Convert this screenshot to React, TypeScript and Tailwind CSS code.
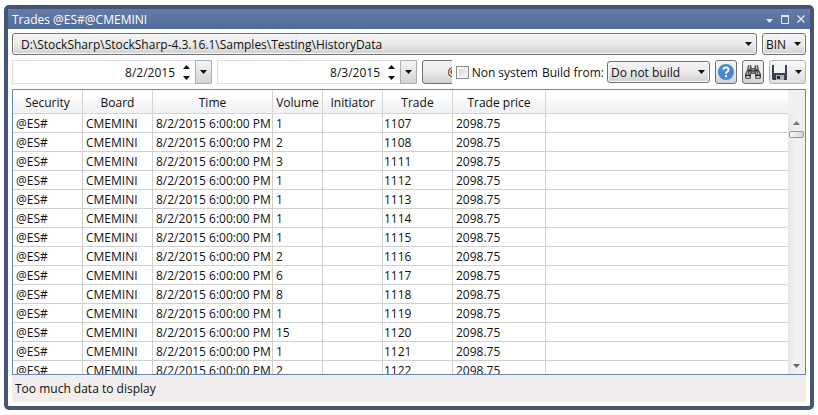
import React from "react";

const volumes = [1, 2, 3, 1, 1, 1, 1, 2, 6, 8, 1, 15, 1, 2];
const trades = [1107, 1108, 1111, 1112, 1113, 1114, 1115, 1116, 1117, 1118, 1119, 1120, 1121, 1122];
const columns = ["Security", "Board", "Time", "Volume", "Initiator", "Trade", "Trade price", ""];

const face = "bg-linear-to-b from-[#f3f3f3] via-[#ebebeb] via-50% to-[#cfcfcf]";

function Arrow({ className = "", up = false }: { className?: string; up?: boolean }) {
  return (
    <svg width="7" height="4" viewBox="0 0 7 4" className={className} aria-hidden="true">
      <path d={up ? "M0 4L3.5 0L7 4Z" : "M0 0H7L3.5 4Z"} fill="currentColor" />
    </svg>
  );
}

type ComboProps = { id?: string; label?: string; value: string; box: string; text: string };

function Combo({ id, label, value, box, text }: ComboProps) {
  return (
    <div className={`relative ${box}`}>
      <select
        id={id}
        aria-label={label}
        className={`block h-full w-full appearance-none rounded-[3px] border border-[#707070] ${face} pt-px pr-4 text-[#111] shadow-[inset_0_0_0_1px_#fafafa] outline-none ${text}`}
      >
        <option>{value}</option>
      </select>
      <Arrow className="pointer-events-none absolute top-1/2 right-[5px] -mt-[2px]" />
    </div>
  );
}

function DatePicker({ label, value }: { label: string; value: string }) {
  return (
    <div className="flex h-6 w-[200px] shrink-0 items-center border border-[#dcdee2] bg-white">
      <input aria-label={label} defaultValue={value} className="min-w-0 flex-1 pt-px text-right outline-none" />
      <div className="ml-2 flex flex-col gap-[7px]">
        <button type="button" aria-label="Next day">
          <Arrow up className="block" />
        </button>
        <button type="button" aria-label="Previous day">
          <Arrow className="block" />
        </button>
      </div>
      <button
        type="button"
        aria-label="Open calendar"
        className="-my-px -mr-px ml-[5px] flex h-6 w-[17px] items-center justify-center rounded-r-[2px] border border-[#aaaeb5] bg-linear-to-b from-[#f5f5f5] to-[#d4d4d4]"
      >
        <Arrow />
      </button>
    </div>
  );
}

function HelpIcon() {
  return (
    <svg width="16" height="16" viewBox="0 0 16 16" aria-hidden="true">
      <circle cx="8" cy="8" r="8" fill="#4488cf" />
      <path d="M5.4 5.7C5.6 2.6 10.7 2.7 10.6 5.8C10.5 7.6 8 7.5 8 9.8" fill="none" stroke="white" strokeWidth="1.9" />
      <rect x="7" y="11.1" width="2" height="2" fill="white" />
    </svg>
  );
}

function BinocularsIcon() {
  return (
    <svg width="16" height="16" viewBox="0 0 16 16" className="shrink-0" aria-hidden="true">
      <path d="M3 1H6L7 4H9L10 1H13L14 6L16 10V14L15 15H11L10 14V10H6V14L5 15H1L0 14V10L2 6Z" fill="#5c5c5c" />
      <path d="M4.5 1V5M11.5 1V5" stroke="#bdbdbd" strokeWidth="1" />
      <path d="M3 6.5H6.5M9.5 6.5H13" stroke="#2e2e2e" strokeWidth="1" />
      <path d="M2.5 8V11M4.5 8V10M11.5 8V10M13.5 8V11" stroke="#a8a8a8" strokeWidth="1" />
      <path d="M0 11.5H6M10 11.5H16" stroke="#2b2b2b" strokeWidth="1" />
      <path d="M1.5 13H4.5M11.5 13H14.5" stroke="#c9c9c9" strokeWidth="2" />
      <path d="M7 5.5H9M7 8.5H9" stroke="#8f8f8f" strokeWidth="1" />
    </svg>
  );
}

function DiskIcon() {
  return (
    <svg width="15" height="15" viewBox="0 0 15 15" aria-hidden="true">
      <path d="M0 0H15V15H1L0 14Z" fill="#3d414d" />
      <rect x="2" y="0" width="11" height="8" fill="#f4f5f7" />
      <rect x="4" y="10" width="8" height="5" fill="#aeb1b8" />
      <rect x="5" y="11" width="3" height="3" fill="#252832" />
    </svg>
  );
}

export default function App() {
  return (
    <div className="flex h-screen flex-col bg-white px-1 py-[5px] font-['Open_Sans',sans-serif] text-[12px] leading-[18px] text-[#111]">
      <main className="flex min-h-0 flex-1 flex-col overflow-hidden rounded-[5px] border-4 border-[#435578] bg-white">
        <header className="flex h-5 shrink-0 items-center bg-linear-to-b from-[#667ca5] to-[#506b9a] pr-[5px] pl-1 text-white">
          <h1 className="flex-1 pt-px">Trades @ES#@CMEMINI</h1>
          <div className="flex items-center gap-2 text-[#e2e8f2]">
            <button type="button" aria-label="Window menu" className="pt-1">
              <Arrow className="block" />
            </button>
            <button type="button" aria-label="Maximize">
              <svg width="8" height="9" viewBox="0 0 8 9" className="block" aria-hidden="true">
                <path d="M.5 1V8.5H7.5V1M0 1H8" fill="none" stroke="currentColor" />
                <path d="M0 1H8" stroke="currentColor" strokeWidth="2" />
              </svg>
            </button>
            <button type="button" aria-label="Close">
              <svg width="8" height="8" viewBox="0 0 8 8" className="block" aria-hidden="true">
                <path d="M.5.5L7.5 7.5M7.5.5L.5 7.5" stroke="currentColor" strokeWidth="1.3" />
              </svg>
            </button>
          </div>
        </header>

        <div className="flex min-h-0 flex-1 flex-col p-1">
          <div className="flex gap-[5px]">
            <Combo
              label="Data folder"
              value="D:\StockSharp\StockSharp-4.3.16.1\Samples\Testing\HistoryData"
              box="h-[22px] min-w-0 flex-1"
              text="pl-2"
            />
            <Combo label="Format" value="BIN" box="h-[22px] w-11" text="pl-[3px]" />
          </div>

          <div className="mt-[5px] flex items-center">
            <div className="flex min-w-0 flex-1 gap-[5px] overflow-hidden">
              <DatePicker label="From" value="8/2/2015" />
              <DatePicker label="To" value="8/3/2015" />
              <button type="button" className={`h-6 w-[62px] shrink-0 rounded-[3px] border border-[#707070] ${face}`}>
                @
              </button>
            </div>
            <label className="ml-1 flex items-center gap-[3px] pt-px whitespace-nowrap">
              <input
                type="checkbox"
                className="size-[13px] appearance-none border border-[#8e8f8f] bg-linear-to-br from-[#cdd2d9] to-[#f8f8f8] shadow-[inset_0_0_0_2px_#f4f4f4] checked:bg-[#4488cf]"
              />
              Non system
            </label>
            <label htmlFor="build" className="mr-[3px] ml-1 pt-px whitespace-nowrap">
              Build from:
            </label>
            <Combo id="build" value="Do not build" box="h-[22px] w-[103px]" text="pl-[3px]" />
            <div className="ml-[5px] flex gap-[5px]">
              <button type="button" aria-label="Help" className={`flex h-6 w-[22px] items-center justify-center rounded-[3px] border border-[#707070] ${face}`}>
                <HelpIcon />
              </button>
              <button type="button" aria-label="Find" className={`flex h-6 w-[22px] items-center justify-center rounded-[3px] border border-[#707070] ${face}`}>
                <BinocularsIcon />
              </button>
              <button type="button" aria-label="Save" className="flex h-6 w-[37px] items-center justify-between rounded-[3px] border border-[#adb2b5] bg-linear-to-b from-[#f8f8f8] to-[#dedede] pr-[3px] pl-[2px]">
                <DiskIcon />
                <Arrow />
              </button>
            </div>
          </div>

          <section className="mt-[5px] flex min-h-0 flex-1 border border-[#6488b0]">
            <div className="min-w-0 flex-1 overflow-hidden">
              <table className="w-full table-fixed border-separate border-spacing-0">
                <colgroup>
                  <col className="w-[70px]" />
                  <col className="w-[70px]" />
                  <col className="w-[120px]" />
                  <col className="w-[50px]" />
                  <col className="w-[60px]" />
                  <col className="w-[70px]" />
                  <col className="w-[93px]" />
                  <col />
                </colgroup>
                <thead>
                  <tr className="h-6">
                    {columns.map((name) => (
                      <th
                        key={name}
                        className="border-r border-b border-[#d5d5d5] bg-linear-to-b from-white from-40% via-[#f7f8f9] via-40% to-[#f0f1f3] p-0 pt-[3px] font-normal last:border-r-0"
                      >
                        {name}
                      </th>
                    ))}
                  </tr>
                </thead>
                <tbody className="leading-[17px]">
                  {trades.map((trade, i) => (
                    <tr
                      key={trade}
                      className="h-[19px] *:border-r *:border-b *:border-[#d0d0d0] *:p-0 *:pt-px *:pl-[3px] *:whitespace-nowrap *:last:border-r-0"
                    >
                      <td>@ES#</td>
                      <td>CMEMINI</td>
                      <td>8/2/2015 6:00:00 PM</td>
                      <td>{volumes[i]}</td>
                      <td></td>
                      <td className="pl-px!">{trade}</td>
                      <td>2098.75</td>
                      <td></td>
                    </tr>
                  ))}
                </tbody>
              </table>
            </div>
            <div className="flex w-[17px] flex-col bg-linear-to-r from-[#e6e6e6] to-[#f0f0f0] to-40%">
              <div className="h-6 bg-[#f0f0f0]" />
              <button type="button" aria-label="Scroll up" className="flex h-[17px] items-center justify-center text-[#777]">
                <Arrow up />
              </button>
              <div className="mx-px h-[7px] rounded-[2px] border border-[#979797] bg-linear-to-r from-[#f8f8f8] to-[#d4d4d4]" />
              <div className="flex-1" />
              <button type="button" aria-label="Scroll down" className="flex h-[17px] items-center justify-center text-[#666]">
                <Arrow />
              </button>
            </div>
          </section>
          <footer className="h-[27px] shrink-0 bg-[#f0edec] px-[3px] py-[5px]">Too much data to display</footer>
        </div>
      </main>
    </div>
  );
}
